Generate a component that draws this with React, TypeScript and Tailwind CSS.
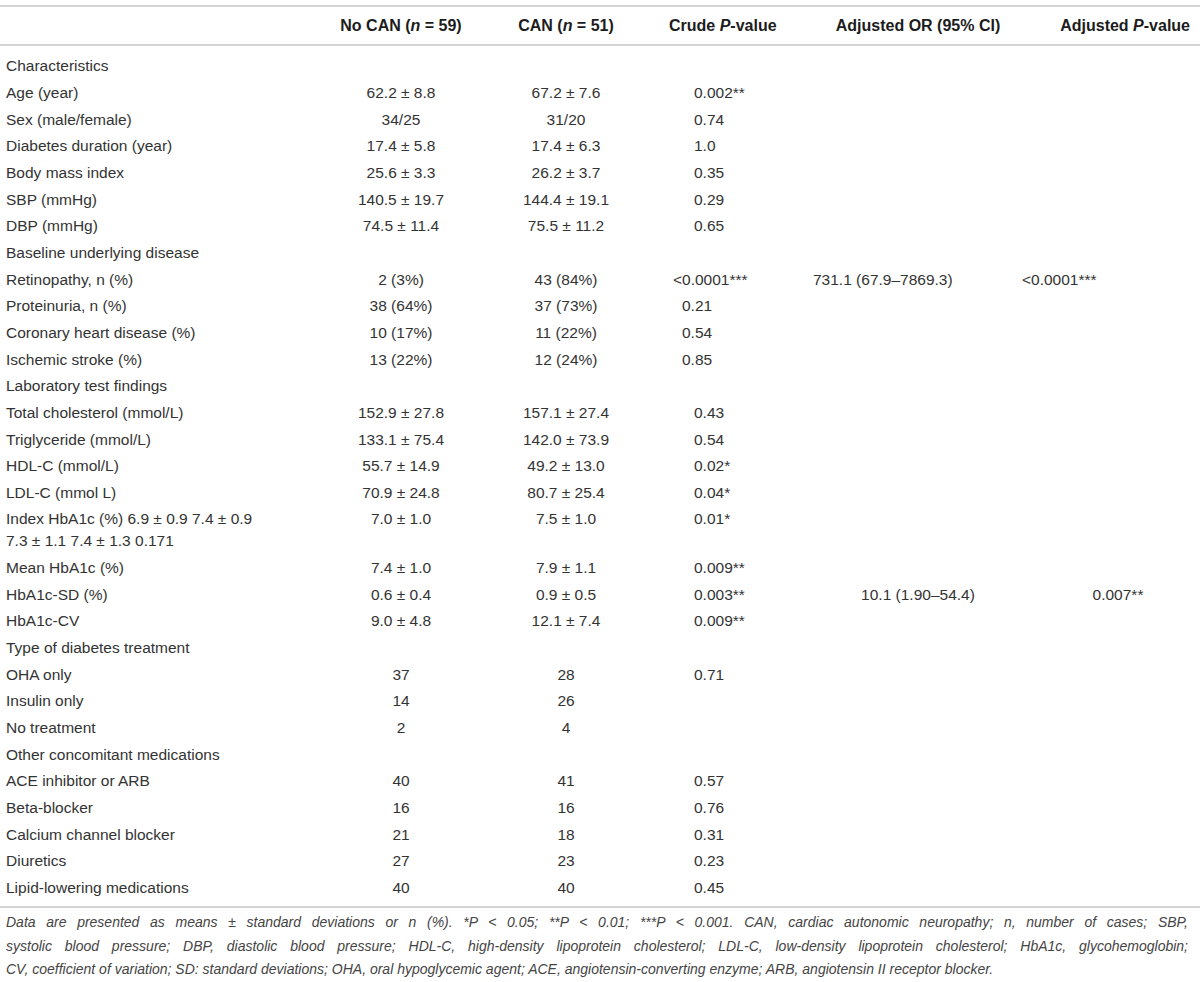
import React from "react";

type Row = {
  label: React.ReactNode;
  noCan?: string;
  can?: string;
  crude?: string;
  crudeClass?: string;
  or?: string;
  orClass?: string;
  adjP?: string;
  adjPClass?: string;
};

const GRID = "grid grid-cols-[330px_142px_188px_140px_236px_164px]";

const rows: Row[] = [
  { label: "Characteristics" },
  { label: "Age (year)", noCan: "62.2 ± 8.8", can: "67.2 ± 7.6", crude: "0.002**" },
  { label: "Sex (male/female)", noCan: "34/25", can: "31/20", crude: "0.74" },
  { label: "Diabetes duration (year)", noCan: "17.4 ± 5.8", can: "17.4 ± 6.3", crude: "1.0" },
  { label: "Body mass index", noCan: "25.6 ± 3.3", can: "26.2 ± 3.7", crude: "0.35" },
  { label: "SBP (mmHg)", noCan: "140.5 ± 19.7", can: "144.4 ± 19.1", crude: "0.29" },
  { label: "DBP (mmHg)", noCan: "74.5 ± 11.4", can: "75.5 ± 11.2", crude: "0.65" },
  { label: "Baseline underlying disease" },
  {
    label: "Retinopathy, n (%)",
    noCan: "2 (3%)",
    can: "43 (84%)",
    crude: "<0.0001***",
    crudeClass: "pl-[13px]",
    or: "731.1 (67.9–7869.3)",
    orClass: "text-left pl-[13px]",
    adjP: "<0.0001***",
    adjPClass: "text-left -ml-[14px]",
  },
  { label: "Proteinuria, n (%)", noCan: "38 (64%)", can: "37 (73%)", crude: "0.21", crudeClass: "pl-[22px]" },
  { label: "Coronary heart disease (%)", noCan: "10 (17%)", can: "11 (22%)", crude: "0.54", crudeClass: "pl-[22px]" },
  { label: "Ischemic stroke (%)", noCan: "13 (22%)", can: "12 (24%)", crude: "0.85", crudeClass: "pl-[22px]" },
  { label: "Laboratory test findings" },
  { label: "Total cholesterol (mmol/L)", noCan: "152.9 ± 27.8", can: "157.1 ± 27.4", crude: "0.43" },
  { label: "Triglyceride (mmol/L)", noCan: "133.1 ± 75.4", can: "142.0 ± 73.9", crude: "0.54" },
  { label: "HDL-C (mmol/L)", noCan: "55.7 ± 14.9", can: "49.2 ± 13.0", crude: "0.02*" },
  { label: "LDL-C (mmol L)", noCan: "70.9 ± 24.8", can: "80.7 ± 25.4", crude: "0.04*" },
  {
    label: (
      <>
        Index HbA1c (%) 6.9 ± 0.9 7.4 ± 0.9
        <br />
        7.3 ± 1.1 7.4 ± 1.3 0.171
      </>
    ),
    noCan: "7.0 ± 1.0",
    can: "7.5 ± 1.0",
    crude: "0.01*",
  },
  { label: "Mean HbA1c (%)", noCan: "7.4 ± 1.0", can: "7.9 ± 1.1", crude: "0.009**" },
  { label: "HbA1c-SD (%)", noCan: "0.6 ± 0.4", can: "0.9 ± 0.5", crude: "0.003**", or: "10.1 (1.90–54.4)", adjP: "0.007**" },
  { label: "HbA1c-CV", noCan: "9.0 ± 4.8", can: "12.1 ± 7.4", crude: "0.009**" },
  { label: "Type of diabetes treatment" },
  { label: "OHA only", noCan: "37", can: "28", crude: "0.71" },
  { label: "Insulin only", noCan: "14", can: "26" },
  { label: "No treatment", noCan: "2", can: "4" },
  { label: "Other concomitant medications" },
  { label: "ACE inhibitor or ARB", noCan: "40", can: "41", crude: "0.57" },
  { label: "Beta-blocker", noCan: "16", can: "16", crude: "0.76" },
  { label: "Calcium channel blocker", noCan: "21", can: "18", crude: "0.31" },
  { label: "Diuretics", noCan: "27", can: "23", crude: "0.23" },
  { label: "Lipid-lowering medications", noCan: "40", can: "40", crude: "0.45" },
];

export default function App() {
  return (
    <div
      className="w-[1200px] h-[982px] bg-white pt-[5px] text-[#333] overflow-hidden"
      style={{ fontFamily: '"Liberation Sans", Arial, sans-serif' }}
    >
      {/* Header */}
      <div className={`${GRID} h-[41px] items-center border-y-2 border-[#d4d4d4] text-[16px] font-bold text-[#1c1c1c]`}>
        <div />
        <div className="text-center">
          No CAN (<i>n</i> = 59)
        </div>
        <div className="text-center">
          CAN (<i>n</i> = 51)
        </div>
        <div className="pl-[9px]">
          Crude <i>P</i>-value
        </div>
        <div className="text-center">Adjusted OR (95% CI)</div>
        <div className="text-right pr-[10px]">
          Adjusted <i>P</i>-value
        </div>
      </div>

      {/* Body */}
      <div className="pt-[7px] pb-[5px] border-b-2 border-[#d4d4d4] text-[15.5px] leading-[22px]">
        {rows.map((r, i) => (
          <div key={i} className={`${GRID} py-[2.33px]`}>
            <div className="pl-[6px]">{r.label}</div>
            <div className="text-center">{r.noCan}</div>
            <div className="text-center">{r.can}</div>
            <div className={r.crudeClass ?? "pl-[34px]"}>{r.crude}</div>
            <div className={r.orClass ?? "text-center"}>{r.or}</div>
            <div className={r.adjPClass ?? "text-center"}>{r.adjP}</div>
          </div>
        ))}
      </div>

      {/* Footnote */}
      <div className="pt-[3px] pl-[6px] pr-[12px] text-[14px] leading-[23.5px] italic text-[#444]">
        <div className="text-justify [text-align-last:justify]">
          Data are presented as means ± standard deviations or n (%). *P &lt; 0.05; **P &lt; 0.01; ***P &lt; 0.001. CAN,
          cardiac autonomic neuropathy; n, number of cases; SBP,
        </div>
        <div className="text-justify [text-align-last:justify]">
          systolic blood pressure; DBP, diastolic blood pressure; HDL-C, high-density lipoprotein cholesterol; LDL-C,
          low-density lipoprotein cholesterol; HbA1c, glycohemoglobin;
        </div>
        <div>
          CV, coefficient of variation; SD: standard deviations; OHA, oral hypoglycemic agent; ACE, angiotensin-converting
          enzyme; ARB, angiotensin II receptor blocker.
        </div>
      </div>
    </div>
  );
}
